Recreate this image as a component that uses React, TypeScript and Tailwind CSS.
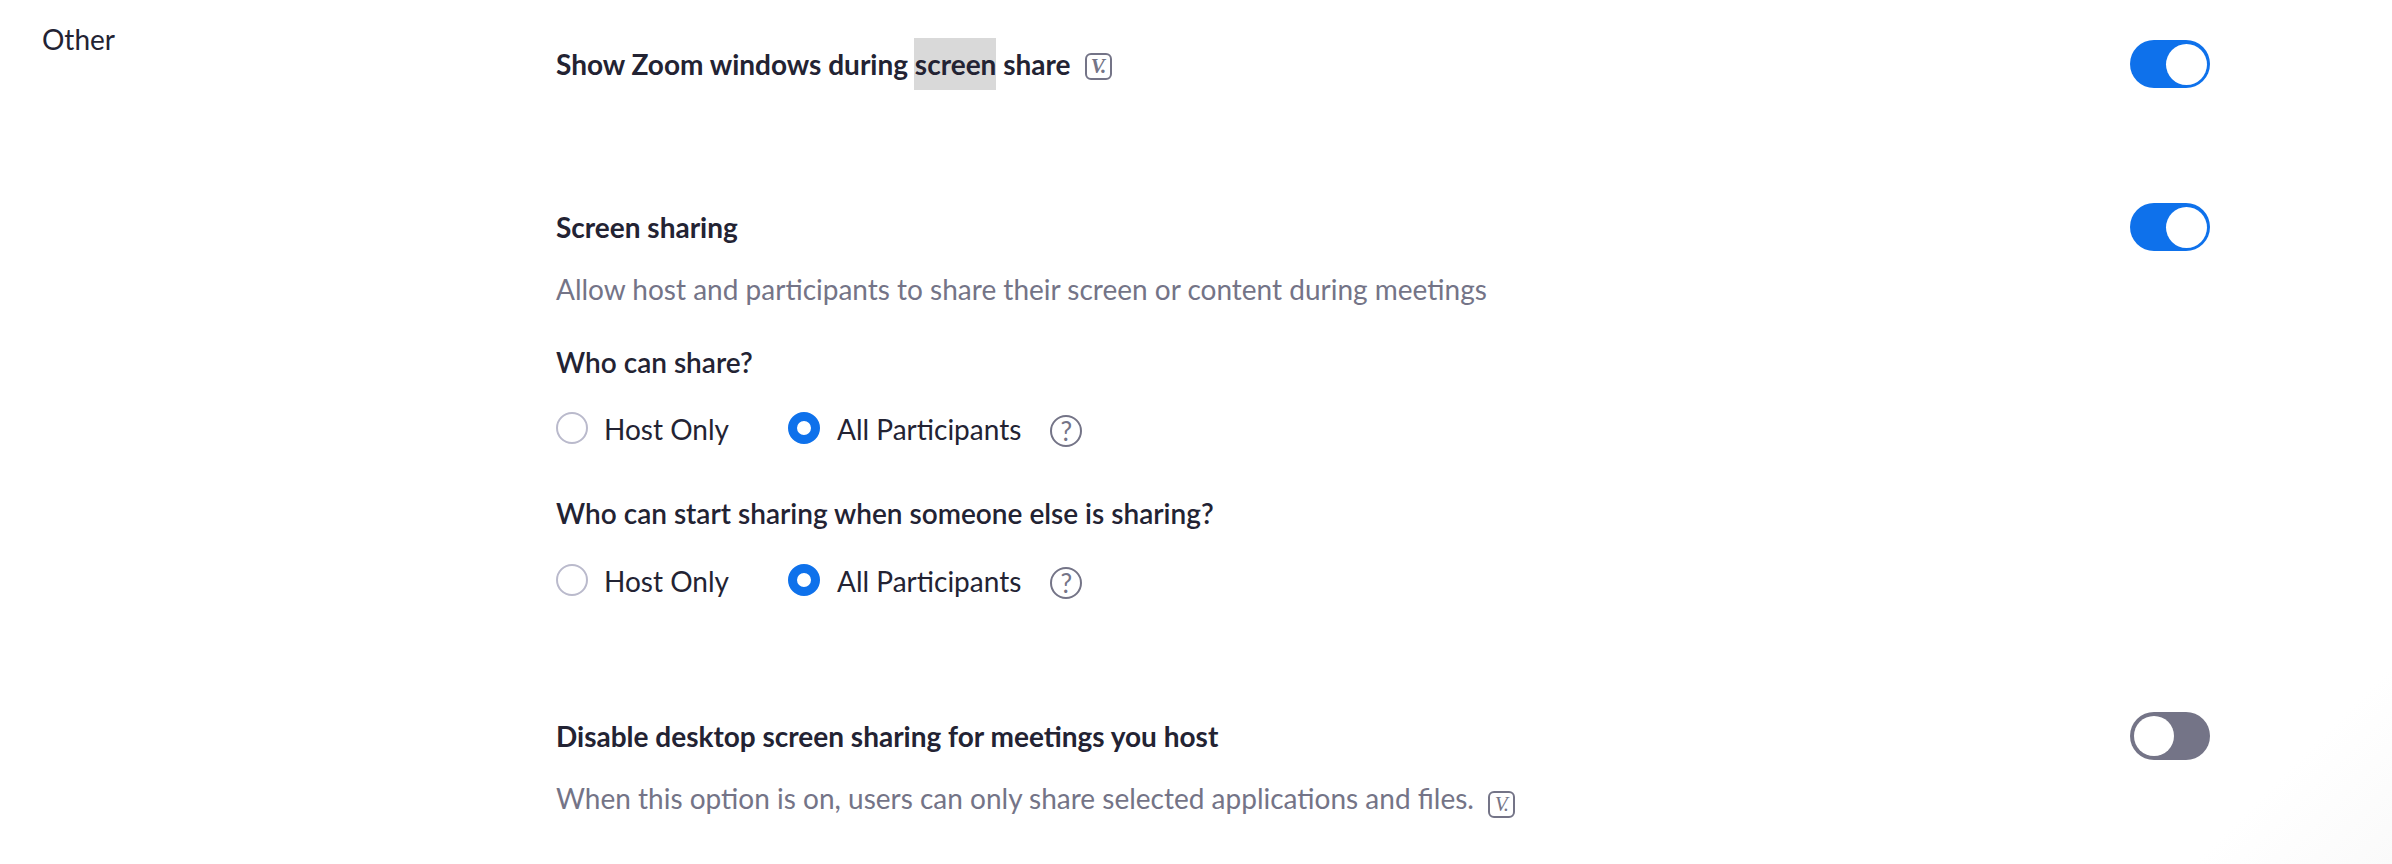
import React from "react";

function Toggle({ on }: { on: boolean }) {
  return (
    <div className={on ? "flex h-12 w-20 shrink-0 items-center justify-end rounded-full bg-[#0e71eb] px-[3px]" : "flex h-12 w-20 shrink-0 items-center justify-start rounded-full bg-[#747487] px-1"}>
      <div className={on ? "h-[41px] w-[41px] rounded-full bg-white" : "h-10 w-10 rounded-full bg-white"} />
    </div>
  );
}

function VBadge() {
  return (
    <span className="inline-flex h-[27px] w-[27px] items-center justify-center rounded-[6px] border-2 border-[#747487] text-[#747487]">
      <span className="font-['Liberation_Serif',serif] text-[21px] italic leading-none tracking-[-1px]">V.</span>
    </span>
  );
}

function Help() {
  return (
    <span className="ml-[29px] mt-[5px] inline-flex h-8 w-8 items-center justify-center rounded-full border-2 border-[#747487] text-[26px] font-normal leading-none text-[#747487]">?</span>
  );
}

function Radios() {
  return (
    <div className="flex h-8 items-center text-[28px] text-[#232333]">
      <span className="h-8 w-8 rounded-full border-2 border-[#babacc] bg-white" />
      <span className="ml-[16px] mt-px w-[184px]">Host Only</span>
      <span className="h-8 w-8 rounded-full border-[9px] border-[#0e71eb] bg-white" />
      <span className="ml-[17px] mt-px">All Participants</span>
      <Help />
    </div>
  );
}

export default function App() {
  return (
    <div className="relative flex h-[864px] w-[2392px] overflow-hidden bg-white font-['Lato',sans-serif] text-[28px] leading-[34px] text-[#232333]">
      <div className="absolute bottom-0 right-0 h-[200px] w-[200px] bg-[linear-gradient(135deg,#ffffff_50%,#fafafa_100%)]" />
      <div className="relative w-[556px] shrink-0 pl-[42px] pt-[22px]">Other</div>
      <div className="relative flex w-[1654px] flex-col pt-[40px]">
        <div className="flex items-center justify-between">
          <div className="flex items-center font-bold">
            <span>Show Zoom windows during&nbsp;</span>
            <span className="-my-[9px] -ml-px bg-[#d9d9d9] py-[9px] pl-px">screen</span>
            <span>&nbsp;share</span>
            <span className="ml-[14px] mt-[4px] flex"><VBadge /></span>
          </div>
          <Toggle on />
        </div>

        <div className="mt-[115px] flex items-start justify-between">
          <div className="flex flex-col">
            <div className="font-bold leading-[48px]">Screen sharing</div>
            <div className="mt-[21px] text-[#747487]">Allow host and participants to share their screen or content during meetings</div>
            <div className="mt-[39px] font-semibold">Who can share?</div>
            <div className="mt-[33px]"><Radios /></div>
            <div className="mt-[52px] font-semibold">Who can start sharing when someone else is sharing?</div>
            <div className="mt-[34px]"><Radios /></div>
          </div>
          <Toggle on />
        </div>

        <div className="mt-[116px] flex items-start justify-between">
          <div className="flex flex-col">
            <div className="font-bold leading-[48px]">Disable desktop screen sharing for meetings you host</div>
            <div className="mt-[21px] flex items-center text-[#747487]">
              <span>When this option is on, users can only share selected applications and files.</span>
              <span className="ml-[14px] flex translate-y-[6px]"><VBadge /></span>
            </div>
          </div>
          <Toggle on={false} />
        </div>
      </div>
    </div>
  );
}
